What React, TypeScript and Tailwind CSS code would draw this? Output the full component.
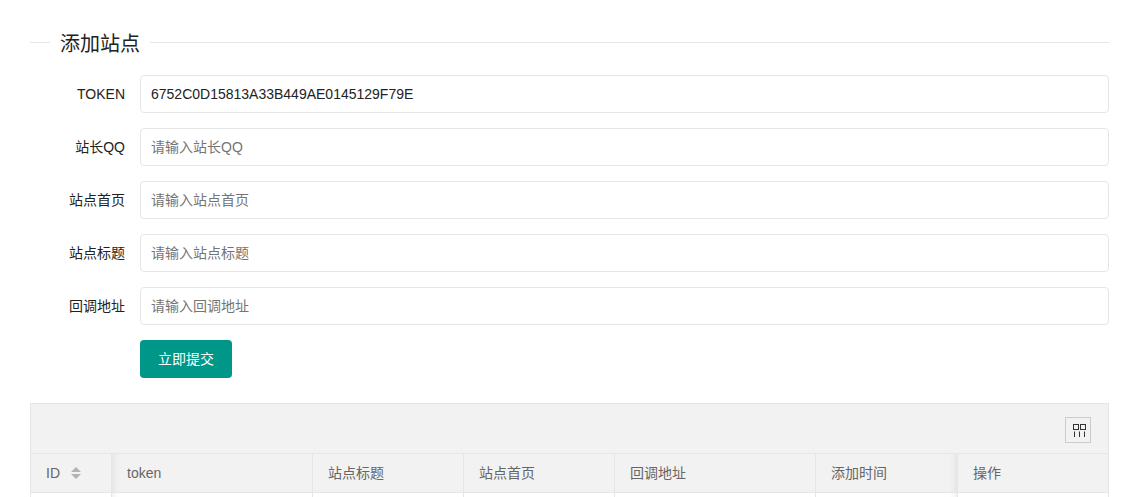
const fields = [
  { label: "TOKEN", value: "6752C0D15813A33B449AE0145129F79E" },
  { label: "站长QQ", placeholder: "请输入站长QQ" },
  { label: "站点首页", placeholder: "请输入站点首页" },
  { label: "站点标题", placeholder: "请输入站点标题" },
  { label: "回调地址", placeholder: "请输入回调地址" },
];

const columns = [
  { title: "token", width: "w-[201px]", shadow: "shadow-[inset_10px_0_10px_-10px_rgba(0,0,0,0.1)]" },
  { title: "站点标题", width: "w-[151px]", shadow: "" },
  { title: "站点首页", width: "w-[151px]", shadow: "" },
  { title: "回调地址", width: "w-[201px]", shadow: "" },
  { title: "添加时间", width: "w-[142px]", shadow: "shadow-[inset_-10px_0_10px_-10px_rgba(0,0,0,0.1)]" },
];

const App = () => {
  return (
    <div className="h-[497px] overflow-hidden bg-white pl-[30px] pr-[23px] font-['Liberation_Sans','Noto_Sans_CJK_SC',sans-serif] text-sm text-[#333]">
      <div className="h-[75px] pt-[30px]">
        <div className="flex items-center h-6">
          <div className="h-px w-5 bg-[#e6e6e6]" />
          <h2 className="px-2.5 pt-[3px] text-xl leading-6 font-normal text-[#222]">添加站点</h2>
          <div className="h-px flex-1 bg-[#e6e6e6]" />
        </div>
      </div>

      <form className="flex flex-col gap-[15px]">
        {fields.map((f) => (
          <div key={f.label} className="flex h-[38px]">
            <label className="w-[110px] pr-[15px] text-right leading-[38px] text-[#222]">{f.label}</label>
            <input
              readOnly
              value={f.value ?? ""}
              placeholder={f.placeholder}
              className="h-[38px] flex-1 rounded-sm border border-[#e6e6e6] bg-white pl-2.5 text-sm text-[#222] outline-none placeholder:text-[#757575]"
            />
          </div>
        ))}
        <div className="flex h-[38px] pl-[110px]">
          <button type="button" className="h-[38px] w-[92px] rounded-sm bg-[#009688] text-sm text-white">
            立即提交
          </button>
        </div>
      </form>

      <div className="mt-[25px] border-x border-t border-[#e6e6e6] bg-[#f2f2f2] text-[#666]">
        <div className="flex h-[50px] items-center justify-end border-b border-[#e6e6e6] pr-[17px]">
          <div className="mt-[3px] flex h-[26px] w-[26px] items-center justify-center border border-[#ccc]">
            <svg width="16" height="16" viewBox="0 0 16 16" fill="none" stroke="#333" strokeWidth="1" className="overflow-visible">
              <rect x="3.5" y="2.5" width="5" height="5" />
              <rect x="10.5" y="2.5" width="5" height="5" />
              <path d="M4.5 9.5V15M9.5 9.5V15M14.5 9.5V15" />
            </svg>
          </div>
        </div>
        <div className="flex h-[39px] border-b border-[#e6e6e6]">
          <div className="flex w-[81px] items-center gap-[11px] border-r border-[#e6e6e6] pl-[15px]">
            <span>ID</span>
            <svg width="10" height="12" viewBox="0 0 10 12" fill="#b2b2b2">
              <path d="M5 0l5 5H0zM5 12L0 7h10z" />
            </svg>
          </div>
          {columns.map((c) => (
            <div
              key={c.title}
              className={`${c.width} ${c.shadow} flex items-center border-r border-[#e6e6e6] pl-[15px]`}
            >
              {c.title}
            </div>
          ))}
          <div className="flex flex-1 items-center pl-[15px]">操作</div>
        </div>
        <div className="flex h-3 bg-white">
          <div className="w-[81px] border-r border-[#e6e6e6]" />
          {columns.map((c) => (
            <div key={c.title} className={`${c.width} ${c.shadow} border-r border-[#e6e6e6]`} />
          ))}
        </div>
      </div>
    </div>
  );
};

export default App;
